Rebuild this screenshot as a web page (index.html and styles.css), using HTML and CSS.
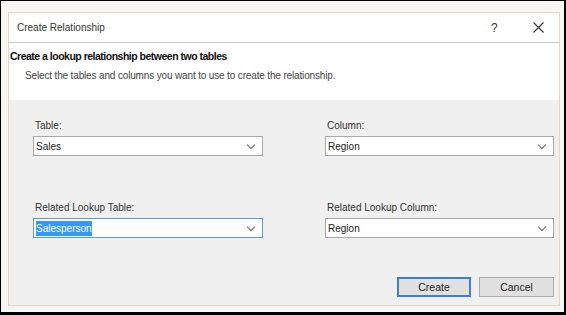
FILE: index.html
```html
<!DOCTYPE html>
<html lang="en">
<head>
  <meta charset="UTF-8" />
  <title>Create Relationship</title>
  <link rel="stylesheet" href="styles.css">
</head>
<body>
  <div class="screen">
    <div class="desk">
      <div class="dialog">
        <div class="titlebar">
          <span class="title">Create Relationship</span>
          <span class="help">?</span>
          <span class="close">
            <svg width="11" height="11" viewBox="0 0 11 11"><path d="M0.5 0.5 L10.5 10.5 M10.5 0.5 L0.5 10.5" stroke="#333" stroke-width="1.1" fill="none"/></svg>
          </span>
        </div>

        <div class="header">
          <h1>Create a lookup relationship between two tables</h1>
          <p>Select the tables and columns you want to use to create the relationship.</p>
        </div>

        <div class="body">
          <div class="fields">
            <div class="field">
              <label>Table:</label>
              <div class="select"><span>Sales</span><i class="chev"></i></div>
            </div>
            <div class="field">
              <label>Column:</label>
              <div class="select"><span>Region</span><i class="chev"></i></div>
            </div>
            <div class="field">
              <label>Related Lookup Table:</label>
              <div class="select focused"><span class="picked">Salesperson</span><i class="chev"></i></div>
            </div>
            <div class="field">
              <label>Related Lookup Column:</label>
              <div class="select"><span>Region</span><i class="chev"></i></div>
            </div>
          </div>

          <div class="buttons">
            <button class="btn default">Create</button>
            <button class="btn">Cancel</button>
          </div>
        </div>
      </div>
    </div>
  </div>
</body>
</html>
```

FILE: styles.css
```css
* {
  box-sizing: border-box;
}

body {
  margin: 0;
  font-family: 'Liberation Sans', Arial, sans-serif;
  font-size: 10px;
  color: #222;
}

.screen {
  width: 566px;
  height: 315px;
  background: #000;
  padding: 1px 2px 3px 1px;
}

.desk {
  height: 100%;
  background: #f7f6f3;
  padding: 11px 4px 6px 7px;
}

.dialog {
  height: 100%;
  border: 1px solid #e2d8c4;
  display: flex;
  flex-direction: column;
  background: #fff;
}

.titlebar {
  height: 30px;
  display: flex;
  align-items: center;
  border-bottom: 1px solid #c9c9c9;
  padding-left: 8px;
}

.title {
  flex: 1;
  font-size: 10px;
  color: #333;
}

.help {
  font-size: 12px;
  color: #333;
  width: 42px;
}

.close {
  width: 26px;
  display: flex;
  align-items: center;
}

.header {
  height: 57px;
  padding: 7px 0 0 1px;
}

.header h1 {
  margin: 0;
  font-size: 10.5px;
  font-weight: bold;
  color: #111;
  letter-spacing: -0.5px;
}

.header p {
  margin: 8px 0 0 15px;
  color: #444;
  letter-spacing: -0.15px;
}

.body {
  flex: 1;
  background: #f0f0f0;
  padding: 20px 5px 0 24px;
  display: flex;
  flex-direction: column;
}

.fields {
  display: grid;
  grid-template-columns: 230px 229px;
  column-gap: 62px;
  row-gap: 46px;
}

.field label {
  display: block;
  height: 16px;
  padding-left: 2px;
  color: #333;
}

.select {
  height: 20px;
  background: #fff;
  border: 1px solid #a9a9a9;
  display: flex;
  align-items: center;
  padding: 0 8px 0 2px;
}

.select span {
  flex: 1;
  color: #222;
}

.select.focused {
  border-color: #5b9bd5;
}

.select span.picked {
  flex: 0 0 auto;
  background: #3399ff;
  color: #fff;
  margin-right: auto;
  line-height: 15px;
}

.chev {
  width: 6px;
  height: 6px;
  border-right: 1px solid #666;
  border-bottom: 1px solid #666;
  transform: rotate(45deg);
  margin-top: -3px;
}

.buttons {
  margin-top: 39px;
  display: flex;
  justify-content: flex-end;
  gap: 8px;
}

.btn {
  width: 75px;
  height: 20px;
  font-family: 'Liberation Sans', Arial, sans-serif;
  font-size: 10.5px;
  color: #222;
  background: #e1e1e1;
  border: 1px solid #adadad;
  padding: 0;
}

.btn.default {
  border: 2px solid #3c7fd8;
  width: 74px;
}
```
